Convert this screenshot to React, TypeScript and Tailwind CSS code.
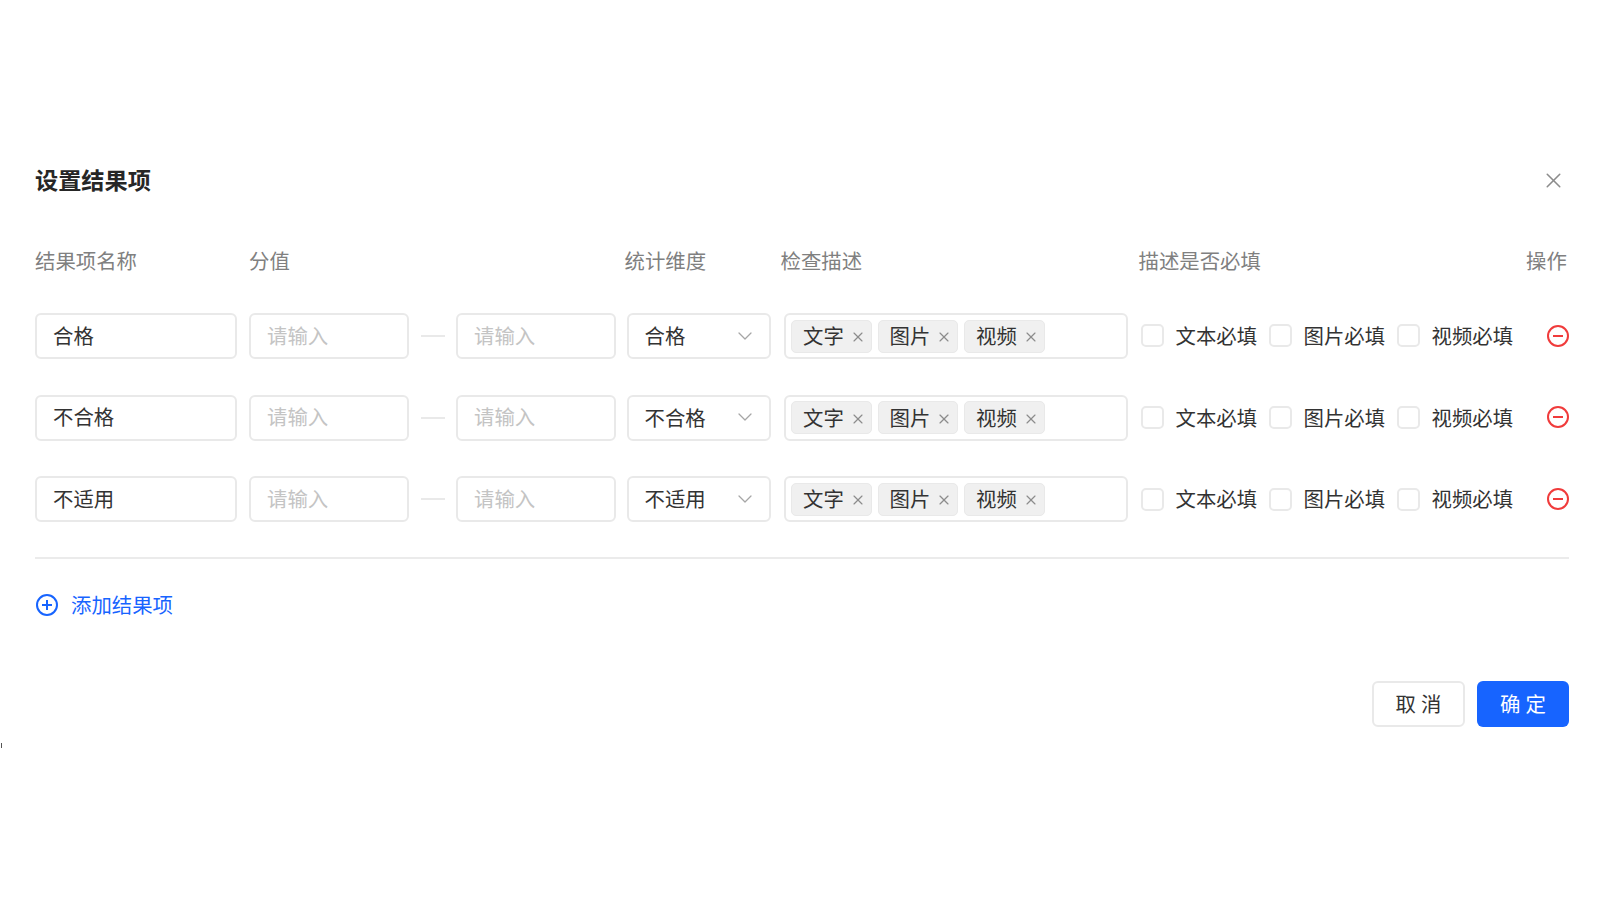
import { ChevronDown, X } from 'lucide-react';

const rows = ['合格', '不合格', '不适用'];
const tags = ['文字', '图片', '视频'];

function Input({ width, value }: { width: string; value?: string }) {
  return (
    <div className={`${width} h-[46px] shrink-0 flex items-center pl-[16px] pb-[2px] rounded-[6px] border-2 border-[#e9e9e9] text-[20.4px] ${value ? 'text-[#333333]' : 'text-[#c4c4c4]'}`}>
      {value ?? '请输入'}
    </div>
  );
}

function Tag({ label }: { label: string }) {
  return (
    <div className="w-[80.5px] h-[33px] flex items-center pl-[11px] pb-[1px] rounded-[5px] border border-[#e9e9e9] bg-[#f0f0f0] text-[20.4px] text-[#333333]">
      {label}
      <X className="ml-[6px] mt-[3px] w-[16px] h-[16px] shrink-0 text-[#8c8c8c]" strokeWidth={1.75} />
    </div>
  );
}

function Check({ label, width }: { label: string; width: string }) {
  return (
    <div className={`${width} shrink-0 flex items-center`}>
      <div className="w-[23px] h-[23px] rounded-[5px] border-2 border-[#e9e9e9] bg-white" />
      <span className="ml-[12px] pb-[1px] text-[20.4px] text-[#333333]">{label}</span>
    </div>
  );
}

function Row({ name }: { name: string }) {
  return (
    <div className="flex items-center h-[46px]">
      <Input width="w-[202px]" value={name} />
      <div className="w-[12px] shrink-0" />
      <Input width="w-[160px]" />
      <div className="w-[47px] shrink-0 flex justify-center">
        <div className="w-[24px] h-[2px] bg-[#e9e9e9]" />
      </div>
      <Input width="w-[160px]" />
      <div className="w-[10.5px] shrink-0" />
      <div className="w-[144px] h-[46px] shrink-0 flex items-center justify-between pl-[16px] pr-[12px] pb-[1px] rounded-[6px] border-2 border-[#e9e9e9] text-[20.4px] text-[#333333]">
        {name}
        <ChevronDown className="w-[24px] h-[24px] text-[#a6a6a6]" strokeWidth={1.25} />
      </div>
      <div className="w-[13.5px] shrink-0" />
      <div className="w-[344px] h-[46px] shrink-0 flex items-center gap-[6px] pl-[5px] rounded-[6px] border-2 border-[#e9e9e9]">
        {tags.map((tag) => (
          <Tag key={tag} label={tag} />
        ))}
      </div>
      <div className="w-[12.5px] shrink-0" />
      <Check label="文本必填" width="w-[128px]" />
      <Check label="图片必填" width="w-[128px]" />
      <Check label="视频必填" width="w-[150.5px]" />
      <svg className="w-[22px] h-[22px] shrink-0 mb-[1px]" viewBox="0 0 22 22" fill="none" stroke="#f03b3b" strokeWidth="2">
        <circle cx="11" cy="11" r="10" />
        <path d="M6 11h10" />
      </svg>
    </div>
  );
}

export default function App() {
  return (
    <div
      className="relative w-full h-[900px] bg-white overflow-hidden pt-[163px] pl-[35px] pr-[31px]"
      style={{ fontFamily: '"Noto Sans CJK SC", sans-serif' }}
    >
      {/* title */}
      <div className="flex items-center justify-between h-[32px] pr-[3px]">
        <h2 className="text-[23.2px] font-bold text-[#262626]">设置结果项</h2>
        <X className="w-[25px] h-[25px] mt-[2px] text-[#8c8c8c]" strokeWidth={1.5} />
      </div>

      {/* column headers */}
      <div className="flex items-center h-[28px] mt-[51px] text-[20.4px] text-[#808080]">
        <div className="w-[214px]">结果项名称</div>
        <div className="w-[375.5px]">分值</div>
        <div className="w-[156px]">统计维度</div>
        <div className="w-[358px]">检查描述</div>
        <div className="w-[387.5px]">描述是否必填</div>
        <div>操作</div>
      </div>

      {/* rows */}
      <div className="flex flex-col gap-[35.6px] mt-[39px]">
        {rows.map((name) => (
          <Row key={name} name={name} />
        ))}
      </div>

      <div className="h-[2px] bg-[#ebebeb] mt-[34.5px]" />

      <div className="flex items-center mt-[32px] pl-[1px] h-[28px] text-[20.4px] text-[#1764ff]">
        <svg className="w-[22px] h-[22px]" viewBox="0 0 22 22" fill="none" stroke="#1764ff" strokeWidth="2">
          <circle cx="11" cy="11" r="10" />
          <path d="M6 11h10M11 6v10" />
        </svg>
        <span className="ml-[13px]">添加结果项</span>
      </div>

      {/* footer */}
      <div className="flex justify-end gap-[12px] mt-[62px]">
        <button className="w-[93px] h-[46px] pl-[5px] rounded-[6px] border-2 border-[#e9e9e9] bg-white text-[20.4px] tracking-[5px] text-[#333333]">
          取消
        </button>
        <button className="w-[92px] h-[46px] pl-[5px] rounded-[6px] bg-[#1764ff] text-[20.4px] tracking-[5px] text-white">
          确定
        </button>
      </div>

      <div className="absolute left-[1px] top-[743px] w-[1px] h-[5px] bg-[#555555]" />
    </div>
  );
}
